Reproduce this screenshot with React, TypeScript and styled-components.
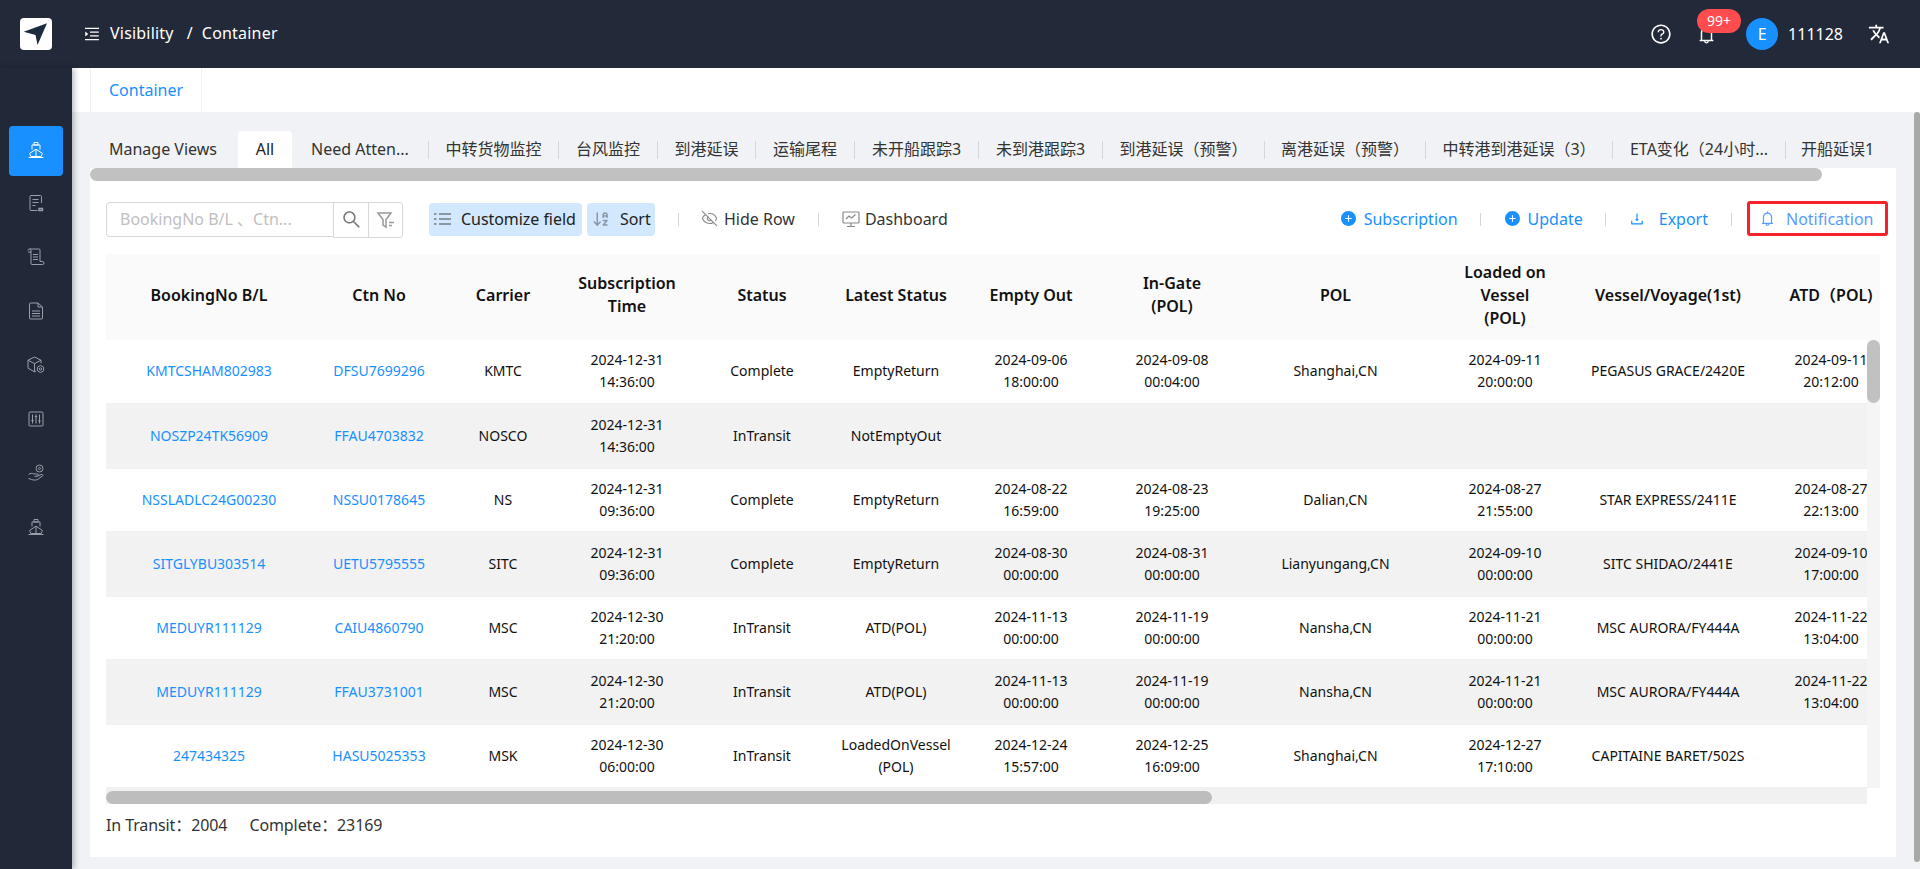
import React from 'react';
import styled, { createGlobalStyle } from 'styled-components';
import { ArrowDownAZ, EyeOff } from 'lucide-react';
import {
  AiFillPlusCircle,
  AiOutlineBell,
  AiOutlineDownload,
  AiOutlineMenuUnfold,
  AiOutlineQuestionCircle,
  AiOutlineSearch,
} from 'react-icons/ai';
import { MdTranslate } from 'react-icons/md';

const GlobalStyle = createGlobalStyle`
  html, body {
    margin: 0;
    height: 100%;
    overflow: hidden;
  }
  body {
    font-family: "Noto Sans", "Noto Sans CJK SC", sans-serif;
    font-size: 14px;
    color: #222;
  }
`;

const TABS = [
  { label: 'Manage Views', width: 146 },
  { label: 'All', width: 54, active: true, lead: 2 },
  { label: 'Need Atten...', width: 136, split: true },
  { label: '中转货物监控', width: 129, split: true },
  { label: '台风监控', width: 98, split: true },
  { label: '到港延误', width: 97, split: true },
  { label: '运输尾程', width: 98, split: true },
  { label: '未开船跟踪3', width: 123, split: true },
  { label: '未到港跟踪3', width: 123, split: true },
  { label: '到港延误（预警）', width: 161, split: true },
  { label: '离港延误（预警）', width: 160, split: true },
  { label: '中转港到港延误（3）', width: 186, split: true },
  { label: 'ETA变化（24小时...', width: 172, split: true },
  { label: '开船延误1', width: 103 },
];

const COLUMNS = [206, 134, 114, 134, 136, 132, 138, 144, 183, 156, 170, 156];

const HEADERS = [
  'BookingNo B/L',
  'Ctn No',
  'Carrier',
  'Subscription\nTime',
  'Status',
  'Latest Status',
  'Empty Out',
  'In-Gate\n(POL)',
  'POL',
  'Loaded on\nVessel\n(POL)',
  'Vessel/Voyage(1st)',
  'ATD（POL)',
];

const ROWS = [
  ['KMTCSHAM802983', 'DFSU7699296', 'KMTC', '2024-12-31\n14:36:00', 'Complete', 'EmptyReturn', '2024-09-06\n18:00:00', '2024-09-08\n00:04:00', 'Shanghai,CN', '2024-09-11\n20:00:00', 'PEGASUS GRACE/2420E', '2024-09-11\n20:12:00'],
  ['NOSZP24TK56909', 'FFAU4703832', 'NOSCO', '2024-12-31\n14:36:00', 'InTransit', 'NotEmptyOut', '', '', '', '', '', ''],
  ['NSSLADLC24G00230', 'NSSU0178645', 'NS', '2024-12-31\n09:36:00', 'Complete', 'EmptyReturn', '2024-08-22\n16:59:00', '2024-08-23\n19:25:00', 'Dalian,CN', '2024-08-27\n21:55:00', 'STAR EXPRESS/2411E', '2024-08-27\n22:13:00'],
  ['SITGLYBU303514', 'UETU5795555', 'SITC', '2024-12-31\n09:36:00', 'Complete', 'EmptyReturn', '2024-08-30\n00:00:00', '2024-08-31\n00:00:00', 'Lianyungang,CN', '2024-09-10\n00:00:00', 'SITC SHIDAO/2441E', '2024-09-10\n17:00:00'],
  ['MEDUYR111129', 'CAIU4860790', 'MSC', '2024-12-30\n21:20:00', 'InTransit', 'ATD(POL)', '2024-11-13\n00:00:00', '2024-11-19\n00:00:00', 'Nansha,CN', '2024-11-21\n00:00:00', 'MSC AURORA/FY444A', '2024-11-22\n13:04:00'],
  ['MEDUYR111129', 'FFAU3731001', 'MSC', '2024-12-30\n21:20:00', 'InTransit', 'ATD(POL)', '2024-11-13\n00:00:00', '2024-11-19\n00:00:00', 'Nansha,CN', '2024-11-21\n00:00:00', 'MSC AURORA/FY444A', '2024-11-22\n13:04:00'],
  ['247434325', 'HASU5025353', 'MSK', '2024-12-30\n06:00:00', 'InTransit', 'LoadedOnVessel\n(POL)', '2024-12-24\n15:57:00', '2024-12-25\n16:09:00', 'Shanghai,CN', '2024-12-27\n17:10:00', 'CAPITAINE BARET/502S', ''],
];

function ShipIcon() {
  return (
    <NavSvg viewBox="0 0 18 18">
      <path d="M7 1.5h4v2.5H7zM5 8.5V4h8v4.5M2.6 12.4 9 8.2l6.4 4.2-1.3 3.1H3.9zM9 8.2v7.3M1.5 16.5h15" />
    </NavSvg>
  );
}

function OrderIcon() {
  return (
    <NavSvg viewBox="0 0 18 18">
      <path d="M14.5 9V2.5a1 1 0 0 0-1-1H4a1 1 0 0 0-1 1v13a1 1 0 0 0 1 1h6.5M5.5 5.5h6M5.5 8.5h6M5.5 11.5h3" />
      <path d="M12 14.5h3.5v2H12z" strokeWidth="1.4" />
    </NavSvg>
  );
}

function ScrollIcon() {
  return (
    <NavSvg viewBox="0 0 18 18">
      <path d="M1 2.5a1.5 1.5 0 0 1 3 0V4H1M2.5 1H12a1 1 0 0 1 1 1v11.5M4 4v11.5a1 1 0 0 0 1 1h10.5a1.5 1.5 0 0 0 0-3H13M6 6.5h5M6 9h5M6 11.5h5" />
    </NavSvg>
  );
}

function DocIcon() {
  return (
    <NavSvg viewBox="0 0 18 18">
      <path d="M11 1H3.5a1 1 0 0 0-1 1v14a1 1 0 0 0 1 1h11a1 1 0 0 0 1-1V5zM11 1v4h4.5M5 9h8M5 11.5h8M5 14h8" />
    </NavSvg>
  );
}

function CubeIcon() {
  return (
    <NavSvg viewBox="0 0 18 18">
      <path d="M7.5 1 1 4.2v8l6.5 3.6 1.5-.8M7.5 1 14 4.2v3M1 4.2l6.5 3.4L14 4.2M7.5 7.6v8.2" />
      <circle cx="13.5" cy="13" r="1.2" />
      <path d="M13.5 9.4 16.6 11.2v3.6l-3.1 1.8-3.1-1.8v-3.6z" />
    </NavSvg>
  );
}

function SlidersIcon() {
  return (
    <NavSvg viewBox="0 0 18 18">
      <rect x="2" y="2" width="14" height="14" rx="1" />
      <path d="M5.5 4.5v9M9 4.5v9M12.5 4.5v9M4.3 10.5h2.4M7.8 6.5h2.4M11.3 11h2.4" />
    </NavSvg>
  );
}

function HandIcon() {
  return (
    <NavSvg viewBox="0 0 18 18">
      <circle cx="12.5" cy="4.5" r="3.5" />
      <circle cx="12.5" cy="4.5" r="1" />
      <path d="M1.5 10.5c2-1.5 3.5-1.5 5.5-.5h3.2a1.1 1.1 0 0 1 0 2.3H7.5M10.5 12l4-1.6c1.2-.4 1.9.8 1 1.5L11 15.2c-2 1.2-4.2 1.1-6.3.3L1.5 14.5" />
    </NavSvg>
  );
}

const NAV_ICONS = [ShipIcon, OrderIcon, ScrollIcon, DocIcon, CubeIcon, SlidersIcon, HandIcon, ShipIcon];

export default function App() {
  return (
    <>
      <GlobalStyle />
      <Page>
        <TopBar>
          <LogoCell>
            <Logo>
              <svg width="32" height="32" viewBox="0 0 32 32">
                <polygon points="3.7,13.7 27,5.3 17.5,27 15.5,17" fill="#1d2b3f" />
              </svg>
            </Logo>
          </LogoCell>
          <AiOutlineMenuUnfold size={18} />
          <Crumbs>
            <span>Visibility</span>
            <CrumbSlash>/</CrumbSlash>
            <span>Container</span>
          </Crumbs>
          <TopActions>
            <AiOutlineQuestionCircle size={22} />
            <BellWrap>
              <AiOutlineBell size={21} />
              <Badge>99+</Badge>
            </BellWrap>
            <Avatar>E</Avatar>
            <UserId>111128</UserId>
            <MdTranslate size={22} />
          </TopActions>
        </TopBar>

        <Sidebar>
          {NAV_ICONS.map((Icon, i) => (
            <NavItem key={i} $active={i === 0}>
              <Icon />
            </NavItem>
          ))}
        </Sidebar>

        <Main>
          <PageTabs>
            <PageTab>Container</PageTab>
          </PageTabs>
          <ContentRow>
            <Content>
              <ViewTabs>
                {TABS.map((tab) => (
                  <React.Fragment key={tab.label}>
                    <ViewTab $width={tab.width} $active={tab.active} $lead={tab.lead}>{tab.label}</ViewTab>
                    {tab.split && <TabSplit />}
                  </React.Fragment>
                ))}
              </ViewTabs>
              <Panel>
                <TabsScroll>
                  <TabsThumb />
                </TabsScroll>
                <Toolbar>
                  <ToolGroup>
                    <SearchInput placeholder="BookingNo B/L 、Ctn..." />
                    <SearchButton>
                      <AiOutlineSearch size={21} />
                    </SearchButton>
                    <FilterButton>
                      <svg width="20" height="20" viewBox="0 0 20 20" fill="none" stroke="currentColor" strokeWidth="1.5">
                        <path d="M2 3h13l-5 6.5V17l-3-2v-5.5z" />
                        <path d="M13 12.5h5M13 15.5h3" />
                      </svg>
                    </FilterButton>
                    <SoftButton $width={153} $gap={10} $left={5}>
                      <svg width="17" height="14" viewBox="0 0 17 14" fill="none" stroke="currentColor" strokeWidth="2">
                        <path d="M0 2h2.5M5 2h12M0 7h2.5M5 7h12M0 12h2.5M5 12h12" />
                      </svg>
                      Customize field
                    </SoftButton>
                    <SoftButton $width={68} $gap={10} $left={5} $mark>
                      <ArrowDownAZ size={18} strokeWidth={2} />
                      Sort
                    </SoftButton>
                    <ToolSplit />
                    <PlainAction $shift={-1}>
                      <EyeOff size={17} strokeWidth={1.6} />
                      Hide Row
                    </PlainAction>
                    <ToolSplit />
                    <PlainAction $gap={5}>
                      <svg width="18" height="18" viewBox="0 0 18 18" fill="none" stroke="currentColor" strokeWidth="1.2">
                        <rect x="1" y="2" width="16" height="11" rx="1" />
                        <path d="M9 13v3M5 16.5h8M4 9l3-3 2.5 2 4-3.5" />
                      </svg>
                      Dashboard
                    </PlainAction>
                  </ToolGroup>
                  <ToolGroup>
                    <BlueAction $gap={7}>
                      <AiFillPlusCircle size={17} />
                      Subscription
                    </BlueAction>
                    <ToolSplit $left={22} />
                    <BlueAction $gap={7}>
                      <AiFillPlusCircle size={17} />
                      Update
                    </BlueAction>
                    <ToolSplit $left={22} />
                    <BlueAction $gap={14}>
                      <AiOutlineDownload size={16} />
                      Export
                    </BlueAction>
                    <ToolSplit $right={15} />
                    <NoticeBox>
                      <AiOutlineBell size={17} />
                      Notification
                    </NoticeBox>
                  </ToolGroup>
                </Toolbar>

                <TableFrame>
                  <HeadClip>
                    <GridTable>
                      <ColGroup />
                      <thead>
                        <tr>
                          {HEADERS.map((h) => (
                            <HeadCell key={h}>{h}</HeadCell>
                          ))}
                        </tr>
                      </thead>
                    </GridTable>
                  </HeadClip>
                  <BodyRow>
                    <BodyClip>
                      <GridTable>
                        <ColGroup />
                        <tbody>
                          {ROWS.map((row, i) => (
                            <DataRow key={i} $even={i % 2 === 1}>
                              {row.map((cell, c) =>
                                <DataCell key={c} $link={c < 2}>{cell}</DataCell>
                              )}
                            </DataRow>
                          ))}
                        </tbody>
                      </GridTable>
                    </BodyClip>
                    <BodyScroll>
                      <BodyThumb />
                    </BodyScroll>
                  </BodyRow>
                  <BottomScroll>
                    <BottomThumb />
                  </BottomScroll>
                </TableFrame>

                <Totals>
                  <span>In Transit：2004</span>
                  <span>Complete：23169</span>
                </Totals>
              </Panel>
            </Content>
            <PageScroll>
              <PageThumb />
            </PageScroll>
          </ContentRow>
        </Main>
      </Page>
    </>
  );
}

function ColGroup() {
  return (
    <colgroup>
      {COLUMNS.map((w, i) => (
        <Col key={i} $width={w} />
      ))}
    </colgroup>
  );
}

const Page = styled.div`
  display: grid;
  grid-template-columns: 72px 1fr;
  grid-template-rows: 68px 1fr;
  height: 100vh;
  overflow: hidden;
`;

const TopBar = styled.header`
  grid-column: 1 / 3;
  display: flex;
  align-items: center;
  background: #222938;
  color: #fff;
  font-size: 16px;
  padding-right: 30px;
`;

const LogoCell = styled.div`
  width: 72px;
  margin-right: 11px;
  display: flex;
  justify-content: center;
`;

const Logo = styled.div`
  width: 32px;
  height: 32px;
  background: #fff;
  border-radius: 4px;
  display: flex;
`;

const Crumbs = styled.div`
  display: flex;
  align-items: center;
  margin-left: 9px;
  letter-spacing: 0.2px;
  padding-bottom: 2px;
`;

const CrumbSlash = styled.span`
  margin: 0 9px 0 13px;
`;

const TopActions = styled.div`
  margin-left: auto;
  display: flex;
  align-items: center;
`;

const BellWrap = styled.div`
  position: relative;
  display: flex;
  margin: 0 29px 0 24px;
`;

const Badge = styled.span`
  position: absolute;
  left: 1px;
  top: -15px;
  width: 44px;
  height: 24px;
  border-radius: 12px;
  background: #ff4d4f;
  color: #fff;
  font-size: 14px;
  line-height: 23px;
  text-align: center;
`;

const Avatar = styled.div`
  width: 32px;
  height: 32px;
  border-radius: 50%;
  background: #1890ff;
  display: flex;
  align-items: center;
  justify-content: center;
`;

const UserId = styled.span`
  margin: 0 25px 0 10px;
`;

const Sidebar = styled.nav`
  position: relative;
  z-index: 1;
  display: flex;
  flex-direction: column;
  background: #212838;
  box-shadow: 2px 0 6px rgba(0, 21, 41, 0.3);
  padding-top: 56px;
`;

const NavItem = styled.div<{ $active?: boolean }>`
  flex: none;
  height: 50px;
  box-sizing: border-box;
  margin: 2px 9px ${(p) => (p.$active ? 0 : 2)}px;
  padding-bottom: ${(p) => (p.$active ? 2 : 0)}px;
  border-radius: 4px;
  display: flex;
  align-items: center;
  justify-content: center;
  background: ${(p) => (p.$active ? '#1890ff' : 'transparent')};
  color: ${(p) => (p.$active ? '#fff' : '#9a9ea8')};
`;

const NavSvg = styled.svg`
  width: 18px;
  height: 18px;
  fill: none;
  stroke: currentColor;
  stroke-width: 1;
`;

const Main = styled.main`
  display: flex;
  flex-direction: column;
  min-width: 0;
  min-height: 0;
`;

const PageTabs = styled.div`
  height: 44px;
  background: #fff;
  padding-left: 18px;
  display: flex;
  flex-shrink: 0;
`;

const PageTab = styled.div`
  width: 112px;
  border: 1px solid #f0f0f0;
  border-width: 0 1px;
  box-sizing: border-box;
  color: #1890ff;
  font-size: 16px;
  line-height: 44px;
  text-align: center;
`;

const ContentRow = styled.div`
  flex: 1;
  display: flex;
  background: #f0f2f5;
  min-height: 0;
`;

const Content = styled.div`
  flex: 1;
  min-width: 0;
  padding: 19px 18px 12px;
  display: flex;
  flex-direction: column;
`;

const ViewTabs = styled.div`
  display: flex;
  align-items: center;
  height: 37px;
  flex-shrink: 0;
  font-size: 16px;
  white-space: nowrap;
  color: #333;
`;

const ViewTab = styled.div<{ $width: number; $active?: boolean; $lead?: number }>`
  width: ${(p) => p.$width}px;
  height: 37px;
  margin-left: ${(p) => p.$lead ?? 0}px;
  line-height: 37px;
  text-align: center;
  border-radius: 4px 4px 0 0;
  background: ${(p) => (p.$active ? '#fff' : 'transparent')};
  color: ${(p) => (p.$active ? '#222' : '#333')};
`;

const TabSplit = styled.span`
  width: 1px;
  height: 18px;
  background: #d4d6da;
`;

const Panel = styled.section`
  flex: 1;
  background: #fff;
  display: flex;
  flex-direction: column;
  min-height: 0;
`;

const TabsScroll = styled.div`
  height: 13px;
  flex-shrink: 0;
`;

const TabsThumb = styled.div`
  width: 1732px;
  height: 13px;
  border-radius: 7px;
  background: #c1c1c1;
`;

const Toolbar = styled.div`
  display: flex;
  justify-content: space-between;
  align-items: center;
  height: 35px;
  margin: 21px 8px 17px 16px;
  flex-shrink: 0;
  font-size: 16px;
`;

const ToolGroup = styled.div`
  display: flex;
  align-items: center;
`;

const SearchInput = styled.input`
  width: 227px;
  height: 35px;
  box-sizing: border-box;
  border: 1px solid #d9d9d9;
  border-right: 0;
  border-radius: 4px 0 0 4px;
  padding: 0 13px 2px;
  font: inherit;
  outline: none;
  &::placeholder {
    color: #bfbfbf;
  }
`;

const SearchButton = styled.div`
  width: 36px;
  height: 36px;
  box-sizing: border-box;
  border: 1px solid #d9d9d9;
  display: flex;
  align-items: center;
  justify-content: center;
  color: #777;
`;

const FilterButton = styled.div`
  width: 34px;
  height: 36px;
  box-sizing: border-box;
  border: 1px solid #d9d9d9;
  border-left: 0;
  border-radius: 0 4px 4px 0;
  display: flex;
  align-items: center;
  justify-content: center;
  color: #999;
  margin-right: 26px;
`;

const SoftButton = styled.div<{ $width: number; $gap: number; $left: number; $mark?: boolean }>`
  width: ${(p) => p.$width}px;
  height: 33px;
  box-sizing: border-box;
  padding: 0 0 2px ${(p) => p.$left}px;
  margin-left: ${(p) => (p.$mark ? 5 : 0)}px;
  display: flex;
  align-items: center;
  gap: ${(p) => p.$gap}px;
  background: #d1e8ff;
  border-radius: 4px;
  color: #222;
  white-space: nowrap;
  letter-spacing: -0.05px;
  svg {
    color: #8a98a6;
    flex-shrink: 0;
  }
`;

const ToolSplit = styled.span<{ $left?: number; $right?: number }>`
  width: 1px;
  height: 13px;
  background: #d4d4d4;
  margin: 0 ${(p) => p.$right ?? 23}px 0 ${(p) => p.$left ?? 23}px;
`;

const PlainAction = styled.div<{ $gap?: number; $shift?: number }>`
  display: flex;
  align-items: center;
  gap: ${(p) => p.$gap ?? 6}px;
  margin-left: ${(p) => p.$shift ?? 0}px;
  padding-bottom: 2px;
  color: #333;
  svg {
    color: #8a8a8a;
  }
`;

const BlueAction = styled.div<{ $gap: number }>`
  display: flex;
  align-items: center;
  gap: ${(p) => p.$gap}px;
  padding-bottom: 2px;
  color: #1890ff;
`;

const NoticeBox = styled.div`
  width: 141px;
  height: 35px;
  margin-bottom: 3px;
  box-sizing: border-box;
  border: 3px solid #f5222d;
  border-radius: 3px;
  padding: 1px 0 0 9px;
  display: flex;
  align-items: center;
  gap: 10px;
  color: #5a9cfb;
`;

const TableFrame = styled.div`
  margin: 0 16px;
  display: flex;
  flex-direction: column;
  flex-shrink: 0;
`;

const HeadClip = styled.div`
  overflow: hidden;
`;

const GridTable = styled.table`
  width: 1803px;
  table-layout: fixed;
  border-collapse: collapse;
`;

const Col = styled.col<{ $width: number }>`
  width: ${(p) => p.$width}px;
`;

const HeadCell = styled.th`
  height: 86px;
  box-sizing: border-box;
  padding: 0 0 4px;
  background: #fafafa;
  color: #111;
  font-size: 16px;
  font-weight: 600;
  line-height: 23px;
  text-align: center;
  white-space: pre-line;
`;

const BodyRow = styled.div`
  display: flex;
`;

const BodyClip = styled.div`
  flex: 1;
  min-width: 0;
  overflow: hidden;
`;

const DataRow = styled.tr<{ $even: boolean }>`
  height: ${(p) => (p.$even ? 65 : 63)}px;
  background: ${(p) => (p.$even ? '#f2f2f2' : '#fff')};
`;

const DataCell = styled.td<{ $link: boolean }>`
  padding: 0;
  border-bottom: 1px solid #f0f0f0;
  color: ${(p) => (p.$link ? '#1890ff' : '#111')};
  font-size: 14px;
  line-height: 22px;
  text-align: center;
  white-space: pre-line;
`;

const BodyScroll = styled.div`
  width: 13px;
  flex-shrink: 0;
  background: #f5f5f5;
`;

const BodyThumb = styled.div`
  height: 63px;
  border-radius: 7px;
  background: #c1c1c1;
`;

const BottomScroll = styled.div`
  height: 16px;
  display: flex;
  align-items: flex-end;
  background: #f1f1f1;
  margin-right: 13px;
`;

const BottomThumb = styled.div`
  width: 1106px;
  height: 13px;
  border-radius: 7px;
  background: #bdbdbd;
`;

const Totals = styled.div`
  margin: 10px 16px 0;
  display: flex;
  gap: 22px;
  font-size: 16px;
  line-height: 22px;
  letter-spacing: -0.1px;
  color: #333;
`;

const PageScroll = styled.div`
  width: 6px;
  flex-shrink: 0;
`;

const PageThumb = styled.div`
  height: 750px;
  border-radius: 3px;
  background: #a8a8a8;
`;
